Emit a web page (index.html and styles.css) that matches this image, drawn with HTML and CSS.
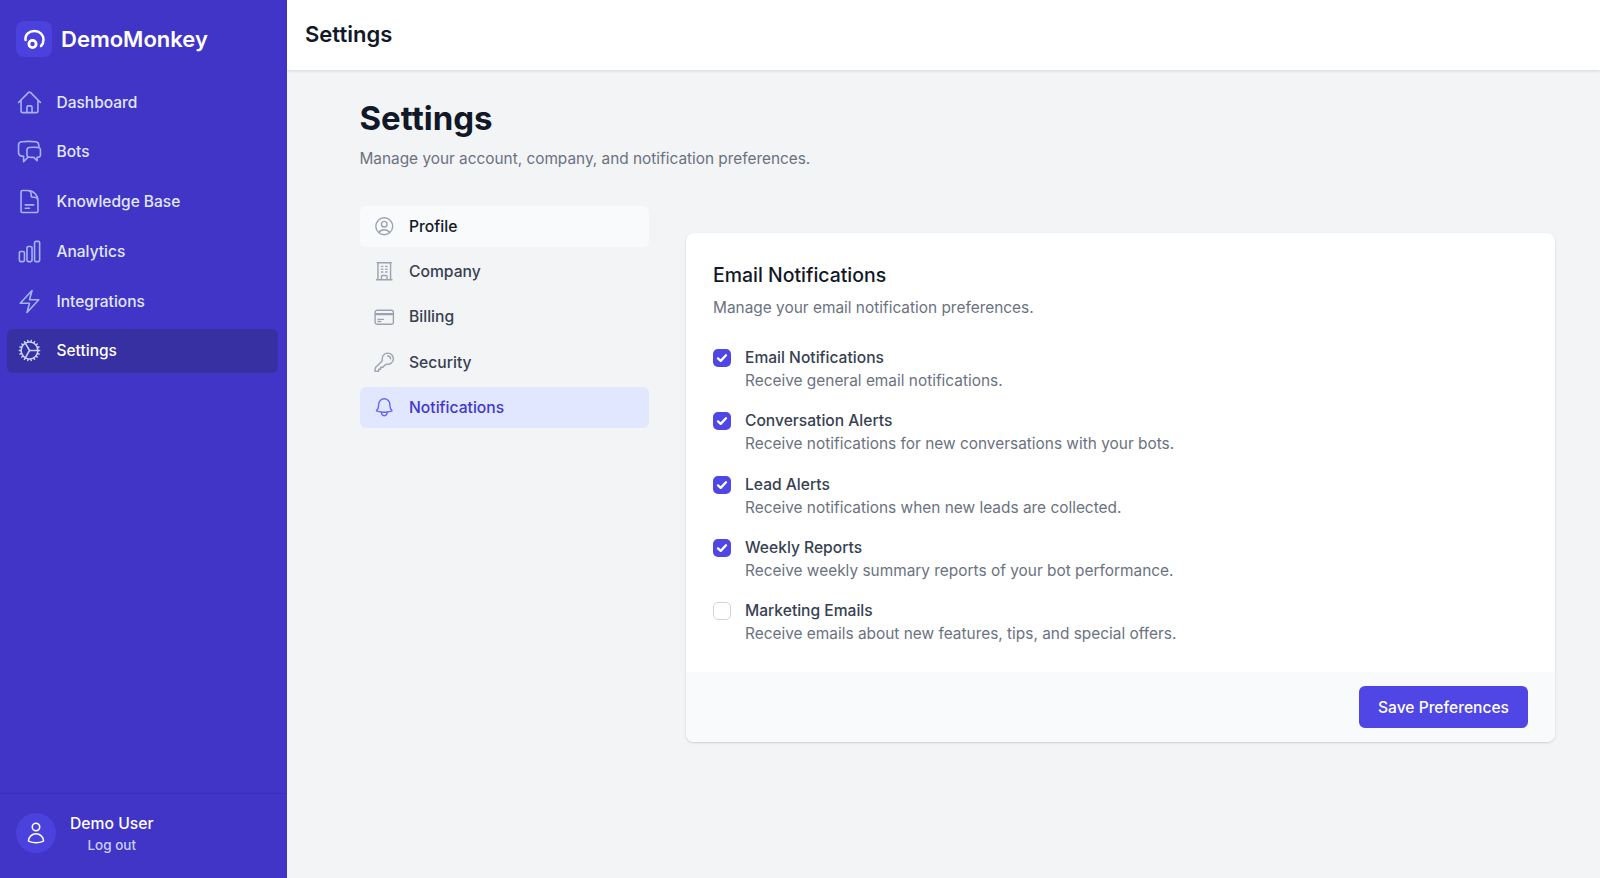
FILE: index.html
```html
<!DOCTYPE html>
<html lang="en">
<head>
<meta charset="utf-8">
<title>Settings - DemoMonkey</title>
<link rel="stylesheet" href="styles.css">
</head>
<body>
<div class="app">
  <aside class="sidebar">
    <div class="brand">
      <span class="brand-mark">
        <svg viewBox="0 0 36 36" fill="none" stroke="#fff" stroke-width="2.5" stroke-linecap="round"><path d="M9.500 19C9 13.500 13 10 18.500 10 24 10 27.500 14 27.500 18.500c0 2.500-1 5-2.500 6.500"/><circle cx="16.500" cy="23" r="3.600" stroke-width="2.800"/></svg>
      </span>
      <span class="brand-name">DemoMonkey</span>
    </div>
    <nav class="nav">
      <a class="nav-item"><svg class="nav-icon" viewBox="0 0 24 24"><path d="M2.25 12l8.954-8.955c.44-.439 1.152-.439 1.591 0L21.75 12M4.5 9.75v10.125c0 .621.504 1.125 1.125 1.125H9.75v-4.875c0-.621.504-1.125 1.125-1.125h2.25c.621 0 1.125.504 1.125 1.125V21h4.125c.621 0 1.125-.504 1.125-1.125V9.75M8.25 21h8.25"/></svg>Dashboard</a>
      <a class="nav-item"><svg class="nav-icon" viewBox="0 0 24 24"><path d="M20.25 8.511c.884.284 1.5 1.128 1.5 2.097v4.286c0 1.136-.847 2.1-1.98 2.193-.34.027-.68.052-1.02.072v3.091l-3-3c-1.354 0-2.694-.055-4.02-.163a2.115 2.115 0 01-.825-.242m9.345-8.334a2.126 2.126 0 00-.476-.095 48.64 48.64 0 00-8.048 0c-1.131.094-1.976 1.057-1.976 2.192v4.286c0 .837.46 1.58 1.155 1.951m9.345-8.334V6.637c0-1.621-1.152-3.026-2.76-3.235A48.455 48.455 0 0011.25 3c-2.115 0-4.198.137-6.24.402-1.608.209-2.76 1.614-2.76 3.235v6.226c0 1.621 1.152 3.026 2.76 3.235.577.075 1.157.14 1.74.194V21l4.155-4.155"/></svg>Bots</a>
      <a class="nav-item"><svg class="nav-icon" viewBox="0 0 24 24"><path d="M19.5 14.25v-2.625a3.375 3.375 0 00-3.375-3.375h-1.5A1.125 1.125 0 0113.5 7.125v-1.5a3.375 3.375 0 00-3.375-3.375H8.25m0 12.75h7.5m-7.5 3H12M10.5 2.25H5.625c-.621 0-1.125.504-1.125 1.125v17.25c0 .621.504 1.125 1.125 1.125h12.75c.621 0 1.125-.504 1.125-1.125V11.25a9 9 0 00-9-9z"/></svg>Knowledge Base</a>
      <a class="nav-item"><svg class="nav-icon" viewBox="0 0 24 24"><path d="M3 13.125C3 12.504 3.504 12 4.125 12h2.25c.621 0 1.125.504 1.125 1.125v6.75C7.5 20.496 6.996 21 6.375 21h-2.25A1.125 1.125 0 013 19.875v-6.75zM9.750 8.625c0-.621.504-1.125 1.125-1.125h2.25c.621 0 1.125.504 1.125 1.125v11.25c0 .621-.504 1.125-1.125 1.125h-2.25a1.125 1.125 0 01-1.125-1.125V8.625zM16.500 4.125c0-.621.504-1.125 1.125-1.125h2.25C20.496 3 21 3.504 21 4.125v15.75c0 .621-.504 1.125-1.125 1.125h-2.25a1.125 1.125 0 01-1.125-1.125V4.125z"/></svg>Analytics</a>
      <a class="nav-item"><svg class="nav-icon" viewBox="0 0 24 24"><path d="M3.75 13.5l10.5-11.25L12 10.5h8.25L9.75 21.75 12 13.5H3.75z"/></svg>Integrations</a>
      <a class="nav-item is-active"><svg class="nav-icon" viewBox="0 0 24 24"><path d="M4.5 12a7.5 7.5 0 0015 0m-15 0a7.5 7.5 0 1115 0m-15 0H3m16.5 0H21m-1.5 0H12m-8.457 3.077l1.41-.513m14.095-5.13l1.41-.513M5.106 17.785l1.15-.964m11.49-9.642l1.149-.964M7.501 19.795l.75-1.3m7.5-12.99l.75-1.3m-6.063 16.658l.26-1.477m2.605-14.772l.26-1.477m0 17.726l-.26-1.477M10.698 4.614l-.26-1.477M16.5 19.794l-.75-1.299M7.5 4.205L12 12m6.894 5.785l-1.149-.964M6.256 7.178l-1.15-.964m15.352 8.864l-1.41-.513M4.954 9.435l-1.41-.514M12.002 12l-3.75 6.495"/></svg>Settings</a>
    </nav>
    <div class="user">
      <span class="avatar"><svg viewBox="0 0 24 24"><path d="M15.75 6a3.75 3.75 0 11-7.5 0 3.75 3.75 0 017.5 0zM4.501 20.118a7.5 7.5 0 0114.998 0A17.933 17.933 0 0112 21.75c-2.676 0-5.216-.584-7.499-1.632z"/></svg></span>
      <div class="user-text">
        <div class="user-name">Demo User</div>
        <div class="user-logout">Log out</div>
      </div>
    </div>
  </aside>
  <div class="main">
    <header class="topbar"><span class="topbar-title">Settings</span></header>
    <main class="content">
      <h1 class="page-title">Settings</h1>
      <p class="page-sub">Manage your account, company, and notification preferences.</p>
      <div class="columns">
        <nav class="tabs">
          <a class="tab is-hover"><svg class="tab-icon" viewBox="0 0 24 24"><path d="M17.982 18.725A7.488 7.488 0 0012 15.75a7.488 7.488 0 00-5.982 2.975m11.963 0a9 9 0 10-11.963 0m11.963 0A8.966 8.966 0 0112 21a8.966 8.966 0 01-5.982-2.275M15 9.750a3 3 0 11-6 0 3 3 0 016 0z"/></svg>Profile</a>
          <a class="tab"><svg class="tab-icon" viewBox="0 0 24 24"><path d="M3.75 21h16.5M4.5 3h15M5.25 3v18m13.5-18v18M9 6.75h1.5m-1.5 3h1.5m-1.5 3h1.5m3-6H15m-1.5 3H15m-1.5 3H15M9 21v-3.375c0-.621.504-1.125 1.125-1.125h3.75c.621 0 1.125.504 1.125 1.125V21"/></svg>Company</a>
          <a class="tab"><svg class="tab-icon" viewBox="0 0 24 24"><path d="M2.25 8.25h19.5M2.25 9h19.5m-16.5 5.25h6m-6 2.25h3m-3.75 3h15a2.25 2.25 0 002.25-2.25V6.75A2.25 2.25 0 0019.5 4.5h-15a2.25 2.25 0 00-2.25 2.25v10.5A2.25 2.25 0 004.5 19.5z"/></svg>Billing</a>
          <a class="tab"><svg class="tab-icon" viewBox="0 0 24 24"><path d="M15.75 5.25a3 3 0 013 3m3 0a6 6 0 01-7.029 5.912c-.563-.097-1.159.026-1.563.43L10.5 17.25H8.25v2.25H6v2.25H2.25v-2.818c0-.597.237-1.17.659-1.591l6.499-6.499c.404-.404.527-1 .43-1.563A6 6 0 1121.75 8.25z"/></svg>Security</a>
          <a class="tab is-active"><svg class="tab-icon" viewBox="0 0 24 24"><path d="M14.857 17.082a23.848 23.848 0 005.454-1.31A8.967 8.967 0 0118 9.75v-.7V9A6 6 0 006 9v.75a8.967 8.967 0 01-2.312 6.022c1.733.64 3.56 1.085 5.455 1.31m5.714 0a24.255 24.255 0 01-5.714 0m5.714 0a3 3 0 11-5.714 0"/></svg>Notifications</a>
        </nav>
        <section class="card">
          <div class="card-body">
            <h2 class="card-title">Email Notifications</h2>
            <p class="card-sub">Manage your email notification preferences.</p>
            <div class="options">
              <div class="option"><span class="check is-on"><svg viewBox="0 0 18 18"><path d="M5 9.4l2.7 2.5L13 6.3"/></svg></span><div><div class="option-label">Email Notifications</div><div class="option-desc">Receive general email notifications.</div></div></div>
              <div class="option"><span class="check is-on"><svg viewBox="0 0 18 18"><path d="M5 9.4l2.7 2.5L13 6.3"/></svg></span><div><div class="option-label">Conversation Alerts</div><div class="option-desc">Receive notifications for new conversations with your bots.</div></div></div>
              <div class="option"><span class="check is-on"><svg viewBox="0 0 18 18"><path d="M5 9.4l2.7 2.5L13 6.3"/></svg></span><div><div class="option-label">Lead Alerts</div><div class="option-desc">Receive notifications when new leads are collected.</div></div></div>
              <div class="option"><span class="check is-on"><svg viewBox="0 0 18 18"><path d="M5 9.4l2.7 2.5L13 6.3"/></svg></span><div><div class="option-label">Weekly Reports</div><div class="option-desc">Receive weekly summary reports of your bot performance.</div></div></div>
              <div class="option"><span class="check"></span><div><div class="option-label">Marketing Emails</div><div class="option-desc">Receive emails about new features, tips, and special offers.</div></div></div>
            </div>
          </div>
          <div class="card-footer"><button class="save" type="button">Save Preferences</button></div>
        </section>
      </div>
    </main>
  </div>
</div>
</body>
</html>
```

FILE: styles.css
```css
* { box-sizing: border-box; }
html, body { margin: 0; height: 100%; }
body { font-family: Inter, "Liberation Sans", sans-serif; background: #f3f4f6; color: #111827; overflow: hidden; }
.app { display: flex; height: 878px; }

.sidebar { width: 287px; flex: none; background: #4035c6; display: flex; flex-direction: column; }
.brand { display: flex; align-items: center; gap: 9px; padding: 0 16px; height: 78px; flex: none; }
.brand-mark { width: 36px; height: 36px; border-radius: 8px; background: #4b42de; display: block; }
.brand-mark svg { display: block; width: 36px; height: 36px; }
.brand-name { color: #fff; font-size: 22px; font-weight: 600; }
.nav { flex: 1; display: flex; flex-direction: column; gap: 5.8px; padding: 0 9.5px 0 7px; margin-top: 2px; }
.nav-item { display: flex; align-items: center; gap: 13.5px; height: 44px; padding: 0 9px; border-radius: 6px; color: #e0e7ff; font-size: 15.5px; font-weight: 450; }
.nav-item.is-active { background: #3730a3; color: #fff; }
.nav-icon { width: 27px; height: 27px; flex: none; fill: none; stroke: #a5b4fc; stroke-width: 1.4; stroke-linecap: round; stroke-linejoin: round; }
.nav-item.is-active .nav-icon { stroke: #c7d2fe; }
.user { display: flex; align-items: center; gap: 14px; height: 85px; padding: 0 16px 6px; border-top: 1px solid #3a30b4; }
.avatar { width: 40px; height: 40px; border-radius: 50%; background: #4b42de; display: flex; align-items: center; justify-content: center; }
.avatar svg { width: 24px; height: 24px; fill: none; stroke: #fff; stroke-width: 1.5; stroke-linecap: round; stroke-linejoin: round; }
.user-text { text-align: center; }
.user-name { color: #fff; font-size: 15.7px; font-weight: 450; line-height: 23px; }
.user-logout { color: #c7d2fe; font-size: 13.5px; font-weight: 450; line-height: 20px; }

.main { flex: 1; min-width: 0; display: flex; flex-direction: column; }
.topbar { height: 70px; flex: none; background: #fff; display: flex; align-items: center; padding-left: 18px; box-shadow: 0 1px 3px rgba(0,0,0,.12); }
.topbar-title { font-size: 22px; font-weight: 600; color: #111827; position: relative; top: -1px; }
.content { padding: 26px 45px 0 72.5px; }
.page-title { margin: 0; font-size: 33px; line-height: 44px; font-weight: 700; color: #111827; }
.page-sub { margin: 7px 0 0; font-size: 15.37px; line-height: 24px; color: #6b7280; }
.columns { display: flex; align-items: flex-start; gap: 37.5px; margin-top: 35px; }

.tabs { width: 289px; flex: none; display: flex; flex-direction: column; gap: 4.8px; }
.tab { display: flex; align-items: center; gap: 13.5px; height: 40.5px; padding: 0 13.5px; border-radius: 6px; font-size: 15.66px; font-weight: 450; color: #374151; }
.tab.is-hover { background: #f9fafb; color: #111827; }
.tab.is-active { background: #e0e7ff; color: #4338ca; }
.tab-icon { width: 22.5px; height: 22.5px; flex: none; fill: none; stroke: #9ca3af; stroke-width: 1.5; stroke-linecap: round; stroke-linejoin: round; }
.tab.is-active .tab-icon { stroke: #6366f1; }

.card { flex: 1; min-width: 0; margin-top: 27px; background: #fff; border-radius: 8px; box-shadow: 0 1px 3px rgba(0,0,0,.1), 0 1px 2px rgba(0,0,0,.06); overflow: hidden; }
.card-body { padding: 27.5px 27px 27px; }
.card-title { margin: 0; font-size: 19.45px; line-height: 28px; font-weight: 450; color: #111827; }
.card-sub { margin: 7.5px 0 0; font-size: 15.42px; line-height: 24px; color: #6b7280; }
.options { display: flex; flex-direction: column; gap: 18.35px; margin-top: 27px; }
.option { display: flex; gap: 14px; }
.check { width: 18px; height: 18px; flex: none; margin-top: 2px; border-radius: 5px; background: #fff; border: 1px solid #d1d5db; }
.check.is-on { background: #4f46e5; border: 0; }
.check svg { display: block; width: 18px; height: 18px; fill: none; stroke: #fff; stroke-width: 2.3; stroke-linecap: round; stroke-linejoin: round; }
.option-label { font-size: 15.6px; line-height: 22px; font-weight: 450; color: #374151; }
.option-desc { font-size: 15.42px; line-height: 23px; color: #6b7280; }
.card-footer { background: #f9fafb; display: flex; justify-content: flex-end; padding: 14px 27px; }
.save { height: 42px; width: 169px; border: 0; border-radius: 6px; background: #4f46e5; color: #fff; font: 450 15.6px Inter, "Liberation Sans", sans-serif; }
```
